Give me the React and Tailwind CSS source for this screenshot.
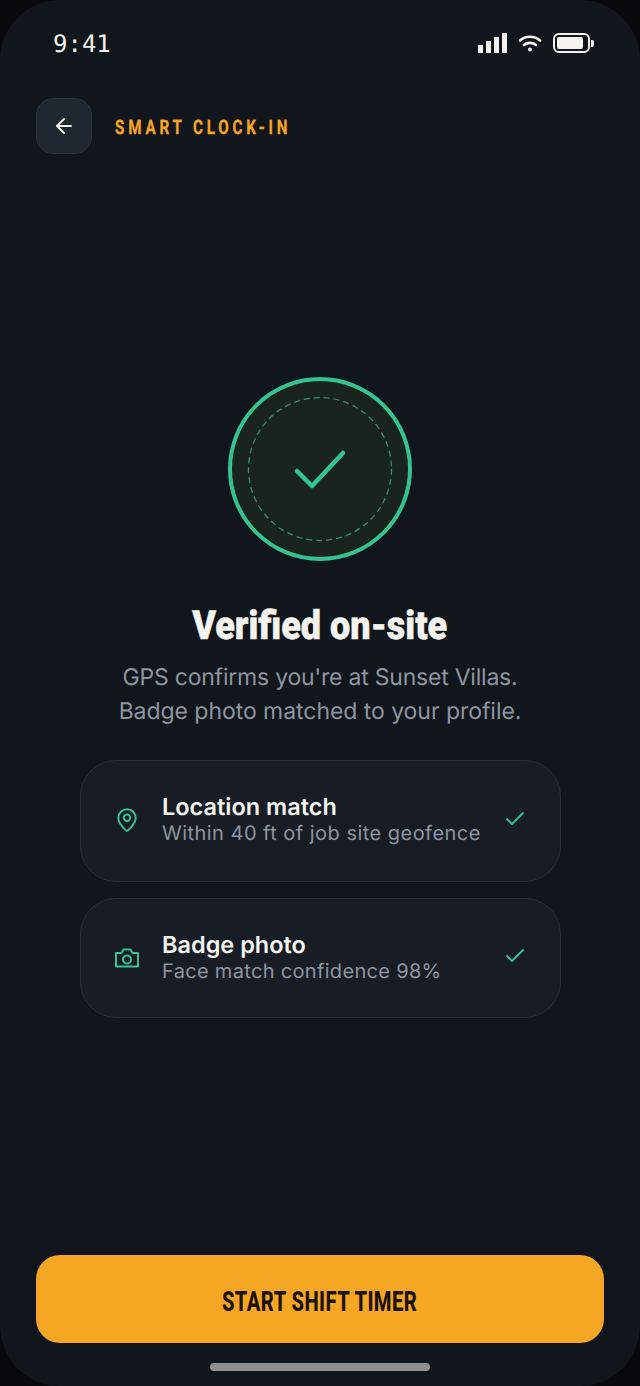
import React from 'react';
import { ArrowLeft, Check, MapPin } from 'lucide-react';

function CameraIcon() {
  return (
    <svg width="26" height="26" viewBox="0 0 26 26" fill="none" stroke="#34c48f" strokeWidth="2" strokeLinejoin="round" className="shrink-0 -mt-[1px]">
      <path d="M2 8H7.5L9.5 4.5H16.5L18.5 8H24V21.5H2Z" />
      <circle cx="13" cy="14.5" r="4" />
    </svg>
  );
}

function PinIcon() {
  return <MapPin className="w-[26px] h-[26px] text-[#34c48f] shrink-0 -mt-[2px]" strokeWidth={1.8} />;
}

const checks = [
  { icon: PinIcon, title: 'Location match', desc: 'Within 40 ft of job site geofence', height: 'h-[122px]', textClass: '-mt-[3px]', descClass: 'tracking-[0.47px]' },
  { icon: CameraIcon, title: 'Badge photo', desc: 'Face match confidence 98%', height: 'h-[120px]', textClass: '-mt-[1px]', descClass: 'tracking-[0.32px]' },
];

function StatusIcons() {
  return (
    <div className="flex items-center gap-[10px] -mt-[2px]">
      <div className="flex items-end gap-[3px]">
        <div className="w-[5px] h-[8px] bg-[#f4f3ee]" />
        <div className="w-[5px] h-[12px] bg-[#f4f3ee]" />
        <div className="w-[5px] h-[16px] bg-[#f4f3ee]" />
        <div className="w-[5px] h-[20px] bg-[#f4f3ee]" />
      </div>
      <svg width="26" height="20" viewBox="0 0 26 20" fill="none" stroke="#f4f3ee" strokeWidth="2.6" strokeLinecap="round">
        <path d="M3 7.5C8.5 2.5 17.5 2.5 23 7.5" />
        <path d="M7 12C10.2 9.2 15.8 9.2 19 12" />
        <circle cx="13" cy="16.5" r="2" fill="#f4f3ee" stroke="none" />
      </svg>
      <div className="flex items-center">
        <div className="w-[37px] h-[20px] rounded-[6px] border-2 border-[#f4f3ee] p-[2px]">
          <div className="w-[26px] h-full rounded-[2px] bg-[#f4f3ee]" />
        </div>
        <div className="w-[3px] h-[7px] ml-[1px] rounded-r-[2px] bg-[#f4f3ee]" />
      </div>
    </div>
  );
}

function CheckCard({ icon: Icon, title, desc, height, textClass, descClass }) {
  return (
    <div className={`${height} flex items-center bg-[#181d25] border border-[#2a303a] rounded-[36px] pl-[33px] pr-[33px]`}>
      <Icon />
      <div className={`ml-[22px] flex-1 ${textClass}`}>
        <p className="text-[23.5px] leading-[27px] font-semibold text-[#f4f3ee]">{title}</p>
        <p className={`text-[20px] leading-[26px] text-[#8d95a0] ${descClass}`}>{desc}</p>
      </div>
      <Check className="w-[24px] h-[24px] text-[#34c48f] shrink-0 -mt-[5px]" strokeWidth={1.8} />
    </div>
  );
}

export default function App() {
  return (
    <div className="w-[640px] h-[1386px] bg-[#08090b] font-['Inter',sans-serif] [text-rendering:geometricPrecision]">
      <div className="h-full rounded-[60px] bg-[#11151c] flex flex-col px-[36px] overflow-hidden">
        {/* Status bar */}
        <div className="flex items-center justify-between h-[28px] mt-[30px] pl-[17px] pr-[10px]">
          <span className="font-['DejaVu_Sans_Mono',monospace] font-medium text-[24px] text-[#f4f3ee]">9:41</span>
          <StatusIcons />
        </div>

        {/* Header */}
        <div className="flex items-center gap-[23px] mt-[40px]">
          <button className="w-[56px] h-[56px] rounded-[17px] bg-[#1f2731] border border-[#2a323d] flex items-center justify-center">
            <ArrowLeft className="w-[24px] h-[24px] text-[#f4f3ee]" strokeWidth={1.8} />
          </button>
          <span className="inline-block origin-left scale-x-[0.76] mt-[2px] font-['Roboto',sans-serif] font-bold text-[20px] tracking-[0.25em] text-[#f5a623] [-webkit-text-stroke:0.3px_#f5a623]">
            SMART CLOCK-IN
          </span>
        </div>

        {/* Verified badge */}
        <div className="flex flex-col items-center mt-[223px]">
          <div className="w-[184px] h-[184px] rounded-full border-[4px] border-[#34c48f] bg-[#1a241f] flex items-center justify-center">
            <svg width="146" height="146" viewBox="0 0 146 146" fill="none">
              <circle cx="73" cy="73" r="71.5" stroke="#3a8a70" strokeWidth="1.3" strokeDasharray="6 4" />
              <path d="M50 75L65 90L96 57" stroke="#34c48f" strokeWidth="4.5" strokeLinecap="round" strokeLinejoin="round" />
            </svg>
          </div>
          <h1 className="mt-[41px] scale-x-[0.9] font-['Roboto',sans-serif] font-black text-[40px] leading-[48px] text-[#f4f3ee] whitespace-nowrap [-webkit-text-stroke:0.5px_#f4f3ee]">
            Verified on-site
          </h1>
          <p className="mt-[10px] text-center text-[23px] leading-[34px] text-[#8d95a0]">
            <span className="tracking-[-0.22px]">GPS confirms you're at Sunset Villas.</span>
            <br />
            <span className="tracking-[-0.05px]">Badge photo matched to your profile.</span>
          </p>
        </div>

        {/* Checks */}
        <div className="flex flex-col gap-[16px] w-[481px] ml-[44px] mt-[32px]">
          {checks.map(c => <CheckCard key={c.title} {...c} />)}
        </div>

        {/* Action */}
        <button className="mt-auto h-[88px] rounded-[24px] bg-[#f5a623] font-['Roboto',sans-serif] font-extrabold text-[28px] tracking-[0.02em] text-[#1a1206]">
          <span className="inline-block scale-x-[0.72] mt-[6px]">START SHIFT TIMER</span>
        </button>
        <div className="w-[220px] h-[8px] rounded-full bg-[#8e8e8e] mx-auto mt-[20px] mb-[15px]" />
      </div>
    </div>
  );
}
